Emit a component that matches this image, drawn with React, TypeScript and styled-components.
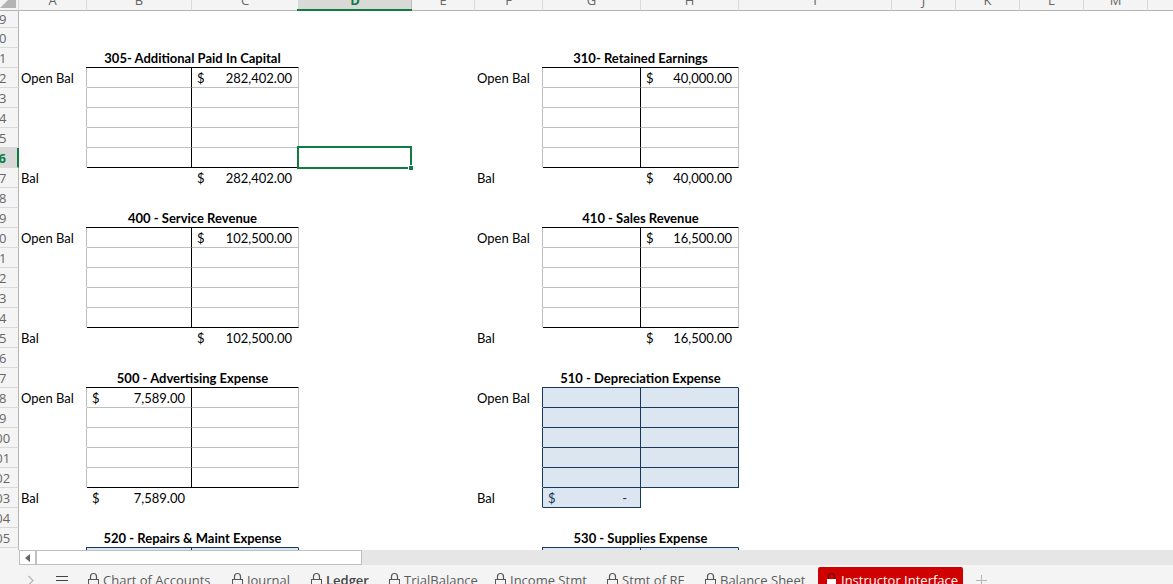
import React from "react";
import styled, { createGlobalStyle, css } from "styled-components";

const GREEN = "#107c41";
const GRID = "#bfbfbf";
const NAVY = "#17375e";
const SHADE = "#dce6f1";
const CHROME = "#f4f4f4";

const GlobalStyle = createGlobalStyle`
  *, *::before, *::after { box-sizing: border-box; }
  html, body { margin: 0; padding: 0; overflow: hidden; background: ${CHROME}; }
`;

const Workbook = styled.main`
  display: flex;
  flex-direction: column;
  height: 100vh;
  font-family: "Open Sans", "Segoe UI", sans-serif;
  font-size: 13px;
  color: #666;
`;

/* The sheet is scrolled a little past its headers, so they are cut at the edges. */
const SheetView = styled.section`
  flex: 1;
  min-height: 0;
  overflow: hidden;
  background: #fff;
`;

const Sheet = styled.table`
  width: calc(100% + 22px);
  min-width: 1234px;
  margin: -9px 0 0 -22px;
  table-layout: fixed;
  border-collapse: separate;
  border-spacing: 0;
  line-height: 17px;
`;

const ColumnHeader = styled.th<{ $active?: boolean }>`
  position: relative;
  height: 20px;
  padding: 0;
  font-weight: 400;
  line-height: 19px;
  text-align: center;
  background: ${CHROME};
  border-right: 1px solid #d9d9d9;
  border-bottom: 1px solid #b4b4b4;
  ${(p) =>
    p.$active &&
    css`
      font-weight: 700;
      color: ${GREEN};
      background: #d9d9d7;
      border-right-color: ${GRID};

      &::after {
        content: "";
        position: absolute;
        inset: auto -1px -1px -2px;
        height: 2px;
        background: ${GREEN};
      }
    `}
`;

const Corner = styled.th`
  height: 20px;
  padding: 0 2px 2px 0;
  background: ${CHROME};
  border-right: 1px solid #d9d9d9;
  border-bottom: 1px solid #b4b4b4;

  svg {
    display: block;
    margin-left: auto;
  }
`;

const RowHeader = styled.th<{ $active?: boolean; $short?: boolean }>`
  height: ${(p) => (p.$short ? 17 : 20)}px;
  padding: ${(p) => (p.$short ? 0 : 2)}px 0 0 2px;
  line-height: ${(p) => (p.$short ? 16 : 17)}px;
  font-weight: 400;
  text-align: center;
  background: ${CHROME};
  border-right: 1px solid #b4b4b4;
  border-bottom: 1px solid #d9d9d9;
  ${(p) =>
    p.$active &&
    css`
      font-weight: 700;
      color: ${GREEN};
      background: #d9d9d7;
      border-right: 2px solid ${GREEN};
    `}
`;

const Cell = styled.td<{ $right?: string; $bottom?: string; $fill?: string }>`
  position: relative;
  padding: 2px 0 0;
  font-family: Lato, Carlito, Calibri, sans-serif;
  color: #000;
  white-space: nowrap;
  background: ${(p) => p.$fill ?? "transparent"};
  border-right: 1px solid ${(p) => p.$right ?? "transparent"};
  border-bottom: 1px solid ${(p) => p.$bottom ?? "transparent"};
`;

const GapCell = styled(Cell)`
  padding: 0;
`;

const LabelCell = styled(Cell)`
  padding-left: 2px;
`;

/* The rule under a title also covers the corner of the account's left edge. */
const TitleCell = styled(Cell)`
  font-weight: 700;
  text-align: center;

  &::before {
    content: "";
    position: absolute;
    left: -1px;
    bottom: -1px;
    width: 1px;
    height: 1px;
    background: ${(p) => p.$bottom};
  }
`;

const Money = styled.span<{ $fill?: string }>`
  display: flex;
  justify-content: space-between;
  padding: 0 6px 0 5px;
  color: ${(p) => (p.$fill ? NAVY : "inherit")};
`;

const Dash = styled.span`
  padding-right: 7px;
`;

const Selection = styled.div`
  position: absolute;
  z-index: 1;
  inset: -2px -1px -2px -2px;
  border: 2px solid ${GREEN};

  &::after {
    content: "";
    position: absolute;
    right: -4px;
    bottom: -4px;
    width: 6px;
    height: 6px;
    background: ${GREEN};
    border: 1px solid #fff;
  }
`;

const ScrollBar = styled.div`
  display: flex;
  flex: none;
  height: 15px;
  margin-left: 19px;
  background: #e6e6e6;
`;

const ScrollButton = styled.button`
  display: grid;
  place-items: center;
  width: 17px;
  padding: 0;
  background: #fff;
  border: 1px solid ${GRID};
`;

const ScrollThumb = styled.div`
  width: 326px;
  background: #fff;
  border: 1px solid ${GRID};
`;

const TabBar = styled.nav`
  display: flex;
  align-items: flex-start;
  flex: none;
  height: 19px;
  padding-top: 2px;
  overflow: hidden;
  background: ${CHROME};
`;

const BarButton = styled.button<{ $width: number }>`
  display: grid;
  place-items: center;
  flex: none;
  width: ${(p) => p.$width}px;
  height: 26px;
  padding: 0;
  background: none;
  border: 0;
`;

const Tab = styled.button<{ $width: number; $bold?: boolean; $alert?: boolean }>`
  display: flex;
  align-items: center;
  gap: 4px;
  flex: none;
  width: ${(p) => p.$width}px;
  height: 26px;
  padding: 0 0 0 8px;
  font: inherit;
  font-weight: ${(p) => (p.$alert ? 500 : p.$bold ? 600 : 400)};
  white-space: nowrap;
  color: ${(p) => (p.$alert ? "#fff" : p.$bold ? "#444" : "#5c5c5c")};
  background: ${(p) => (p.$alert ? "#d00000" : "none")};
  border: 0;
  border-radius: 2px;
`;

const Lock = ({ solid }: { solid?: boolean }) => (
  <svg width="11" height="16" viewBox="0 0 11 16" fill="none" aria-hidden="true">
    <path
      d="M2.5 8V4.500a3 3 0 0 1 6 0V8"
      stroke={solid ? "#5a1a1a" : "#555"}
      strokeWidth="1.2"
    />
    {solid ? (
      <rect x="1" y="7" width="9" height="8" fill="#fff" />
    ) : (
      <rect x="0.5" y="7.500" width="10" height="7" stroke="#555" />
    )}
  </svg>
);

const columns: { name: string; width?: number }[] = [
  { name: "A", width: 68 },
  { name: "B", width: 105 },
  { name: "C", width: 107 },
  { name: "D", width: 113 },
  { name: "E", width: 63 },
  { name: "F", width: 68 },
  { name: "G", width: 98 },
  { name: "H", width: 98 },
  { name: "I", width: 153 },
  { name: "J", width: 64 },
  { name: "K", width: 64 },
  { name: "L", width: 64 },
  { name: "M", width: 64 },
  { name: "N" },
];

type Account = {
  title: string;
  open?: string;
  balance?: string;
  debit?: boolean;
  shaded?: boolean;
};

const accounts: [Account, Account][] = [
  [
    { title: "305- Additional Paid In Capital", open: "282,402.00", balance: "282,402.00" },
    { title: "310- Retained Earnings", open: "40,000.00", balance: "40,000.00" },
  ],
  [
    { title: "400 - Service Revenue", open: "102,500.00", balance: "102,500.00" },
    { title: "410 - Sales Revenue", open: "16,500.00", balance: "16,500.00" },
  ],
  [
    { title: "500 - Advertising Expense", open: "7,589.00", balance: "7,589.00", debit: true },
    { title: "510 - Depreciation Expense", balance: "-", debit: true, shaded: true },
  ],
  [
    { title: "520 - Repairs & Maint Expense", shaded: true },
    { title: "530 - Supplies Expense", shaded: true },
  ],
];

const FIRST_ROW = 79;
const LAST_ROW = 106;
const FIRST_TITLE_ROW = 81;
const ROWS_PER_ACCOUNT = 8;

const Amount = ({ value, fill }: { value: string; fill?: string }) => (
  <Money $fill={fill}>
    <span>$</span>
    {value === "-" ? <Dash>-</Dash> : <span>{value}</span>}
  </Money>
);

/* The three cells (label, debit, credit) that one account has in one row. */
const AccountCells = ({ account, step }: { account?: Account; step: number }) => {
  if (!account || step === 7) {
    return (
      <>
        <GapCell />
        <GapCell />
        <GapCell />
      </>
    );
  }
  const { title, open, balance, debit, shaded } = account;
  const frame = shaded ? NAVY : "#000";
  const line = shaded ? NAVY : GRID;
  const fill = shaded ? SHADE : undefined;

  if (step === 0) {
    return (
      <>
        <GapCell />
        <TitleCell colSpan={2} $bottom={frame}>
          {title}
        </TitleCell>
      </>
    );
  }
  if (step === 6) {
    const edge = shaded ? NAVY : undefined;
    return (
      <>
        <LabelCell $right={edge}>Bal</LabelCell>
        <Cell $right={edge} $bottom={edge} $fill={fill}>
          {debit && balance && <Amount value={balance} fill={fill} />}
        </Cell>
        <Cell>{!debit && balance && <Amount value={balance} />}</Cell>
      </>
    );
  }
  const bottom = step === 5 ? frame : line;
  return (
    <>
      <LabelCell $right={line}>{step === 1 ? "Open Bal" : null}</LabelCell>
      <Cell $right={frame} $bottom={bottom} $fill={fill}>
        {step === 1 && debit && open && <Amount value={open} />}
      </Cell>
      <Cell $right={line} $bottom={bottom} $fill={fill}>
        {step === 1 && !debit && open && <Amount value={open} />}
      </Cell>
    </>
  );
};

const SheetRow = ({ row }: { row: number }) => {
  const offset = row - FIRST_TITLE_ROW;
  const pair = offset >= 0 ? accounts[Math.floor(offset / ROWS_PER_ACCOUNT)] : undefined;
  const step = offset >= 0 ? offset % ROWS_PER_ACCOUNT : 7;
  const active = row === 86;
  return (
    <tr>
      <RowHeader scope="row" $active={active} $short={row === FIRST_ROW}>
        {row}
      </RowHeader>
      <AccountCells account={pair?.[0]} step={step} />
      <GapCell>{active && <Selection />}</GapCell>
      <GapCell />
      <AccountCells account={pair?.[1]} step={step} />
      <GapCell colSpan={6} />
    </tr>
  );
};

const tabs = [
  { name: "Chart of Accounts", width: 144 },
  { name: "Journal", width: 79 },
  { name: "Ledger", width: 78, bold: true },
  { name: "TrialBalance", width: 106 },
  { name: "Income Stmt", width: 112 },
  { name: "Stmt of RE", width: 98 },
  { name: "Balance Sheet", width: 121 },
  { name: "Instructor Interface", width: 145, alert: true },
];

export default function App() {
  const rows = Array.from({ length: LAST_ROW - FIRST_ROW + 1 }, (_, i) => FIRST_ROW + i);
  return (
    <>
      <GlobalStyle />
      <Workbook>
        <SheetView>
          <Sheet>
            <colgroup>
              <col width={41} />
              {columns.map((c) => (
                <col key={c.name} width={c.width} />
              ))}
            </colgroup>
            <thead>
              <tr>
                <Corner>
                  <svg width="16" height="16" viewBox="0 0 16 16" aria-hidden="true">
                    <path d="M16 0V16H0Z" fill="#b4b4b4" />
                  </svg>
                </Corner>
                {columns.map((c) => (
                  <ColumnHeader key={c.name} scope="col" $active={c.name === "D"}>
                    {c.name}
                  </ColumnHeader>
                ))}
              </tr>
            </thead>
            <tbody>
              {rows.map((row) => (
                <SheetRow key={row} row={row} />
              ))}
            </tbody>
          </Sheet>
        </SheetView>
        <ScrollBar>
          <ScrollButton aria-label="Scroll left">
            <svg width="5" height="8" viewBox="0 0 5 8" aria-hidden="true">
              <path d="M5 0V8L0 4Z" fill="#666" />
            </svg>
          </ScrollButton>
          <ScrollThumb />
        </ScrollBar>
        <TabBar aria-label="Sheets">
          <BarButton $width={44} aria-label="Next sheet">
            <svg width="28" height="10" viewBox="0 0 28 10" fill="none" aria-hidden="true">
              <path d="M20.500 1L25 5.500L20.500 10" stroke="#b4b4b4" strokeWidth="1.2" />
            </svg>
          </BarButton>
          <BarButton $width={36} aria-label="All sheets">
            <svg width="12" height="10" viewBox="0 0 12 10" aria-hidden="true">
              <path d="M0 1.500H12M0 5.500H12M0 9.500H12" stroke="#444" />
            </svg>
          </BarButton>
          {tabs.map((t) => (
            <Tab key={t.name} $width={t.width} $bold={t.bold} $alert={t.alert}>
              <Lock solid={t.alert} />
              {t.name}
            </Tab>
          ))}
          <BarButton $width={37} aria-label="New sheet">
            <svg width="11" height="11" viewBox="0 0 11 11" aria-hidden="true">
              <path d="M0 5.500H11M5.500 0V11" stroke="#b4b4b4" />
            </svg>
          </BarButton>
        </TabBar>
      </Workbook>
    </>
  );
}
